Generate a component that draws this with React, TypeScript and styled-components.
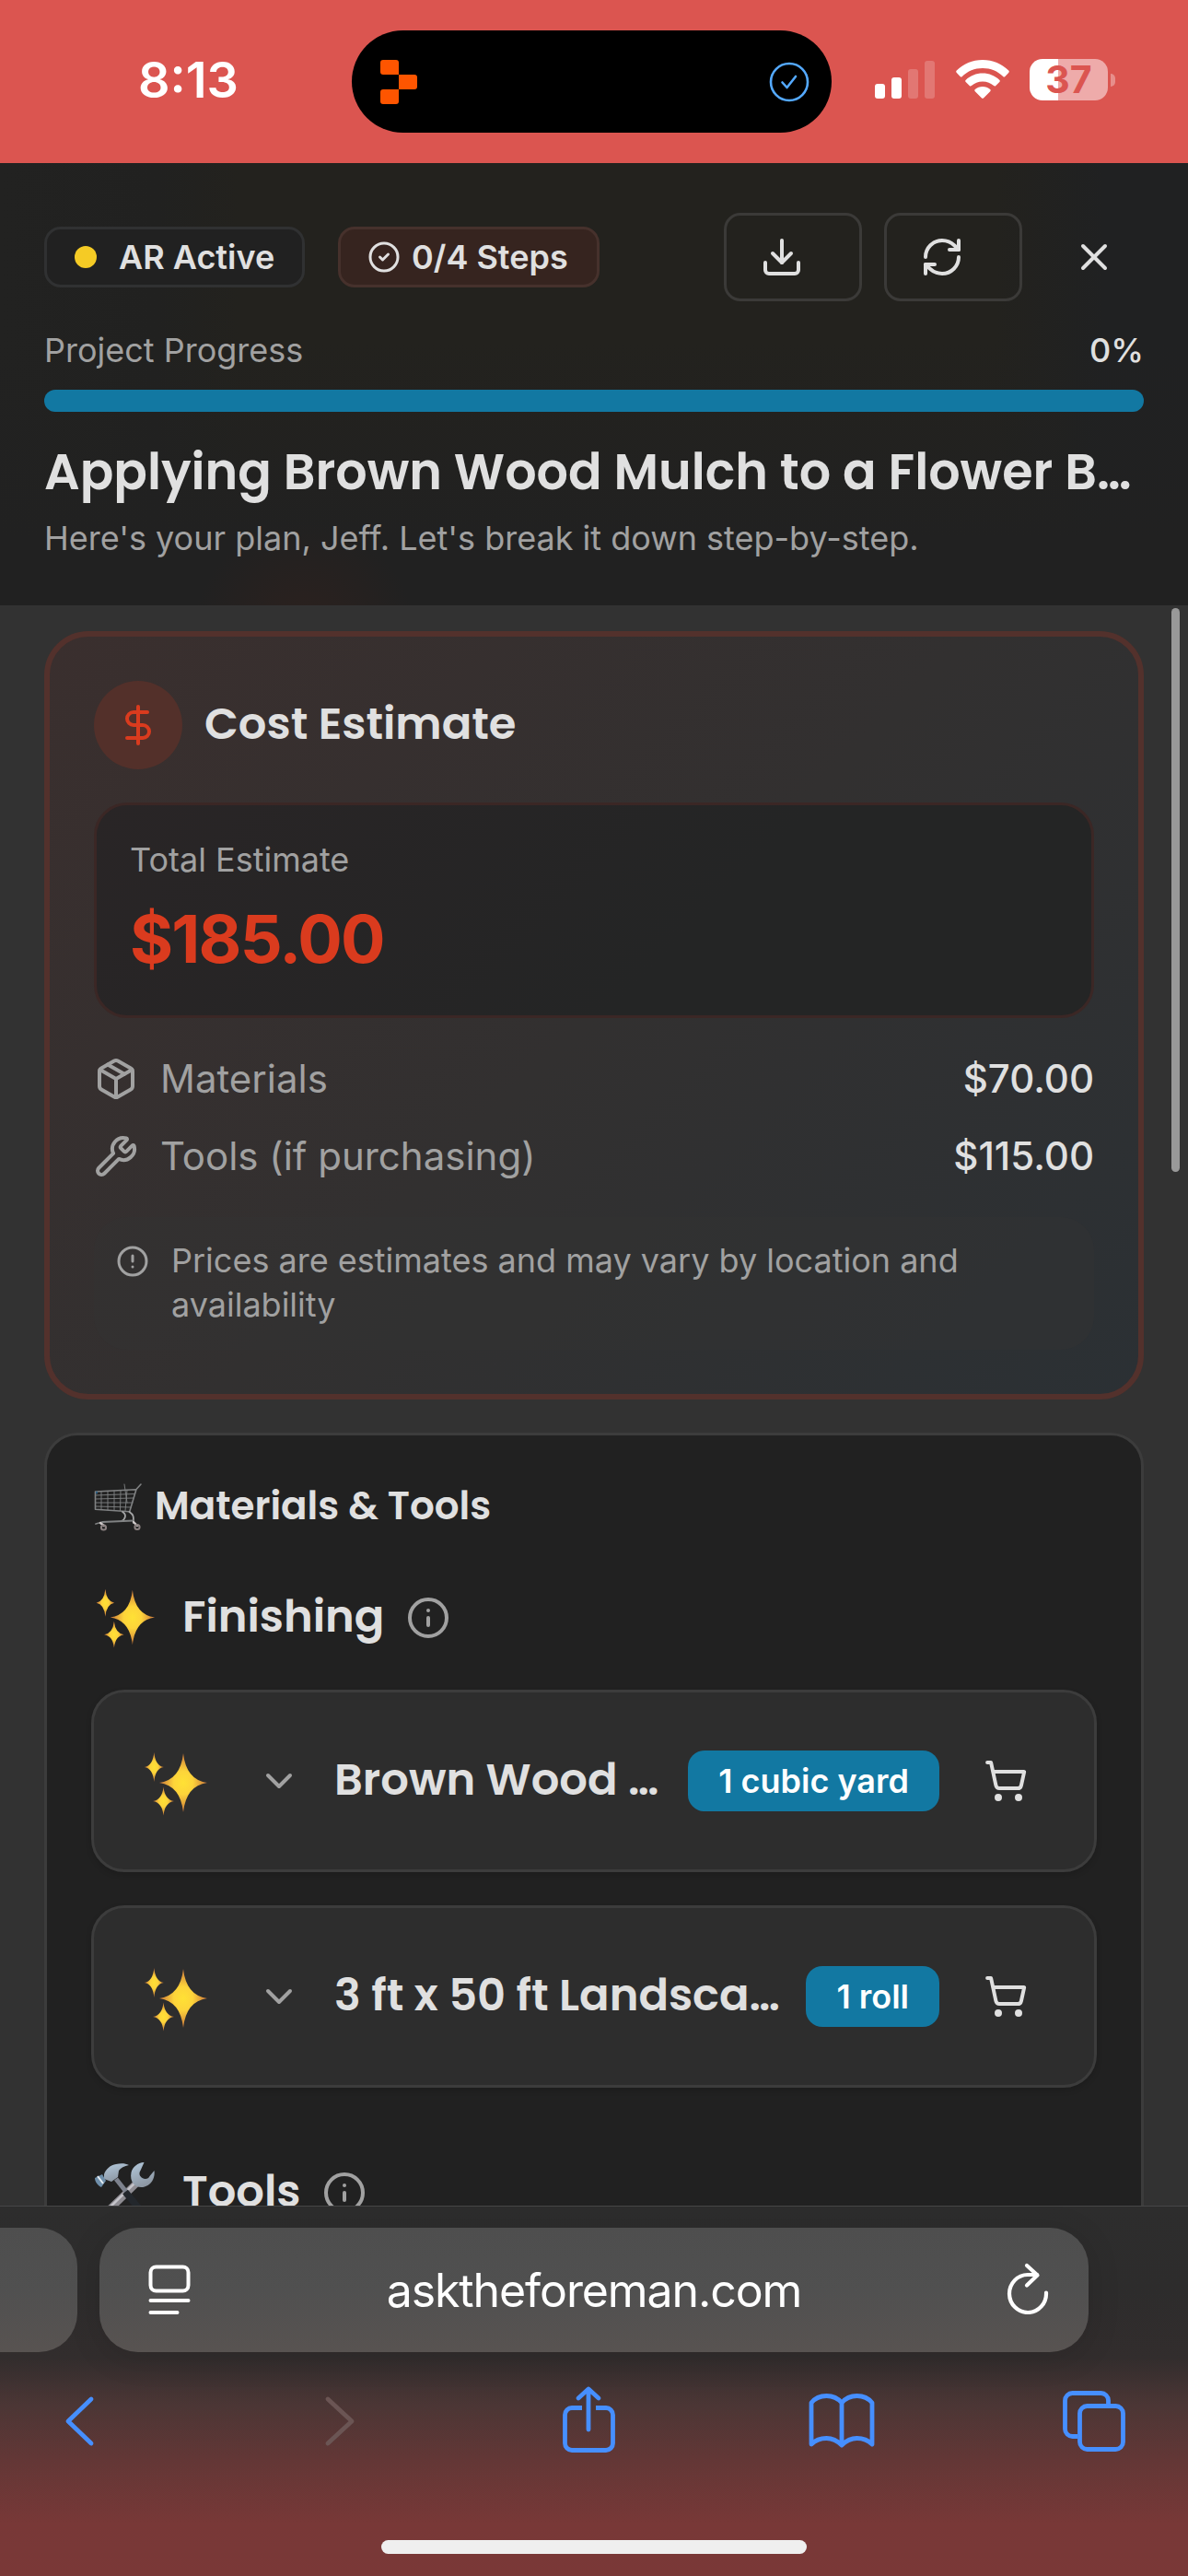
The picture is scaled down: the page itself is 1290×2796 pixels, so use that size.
import React from "react";
import styled, { createGlobalStyle } from "styled-components";
import {
  ChevronDown,
  CircleAlert,
  CircleCheck,
  DollarSign,
  Download,
  Info,
  Package,
  RefreshCw,
  ShoppingCart,
  Wrench,
  X,
} from "lucide-react";

const GlobalStyle = createGlobalStyle`
  * { box-sizing: border-box; }
  body {
    margin: 0;
    background: #323232;
    font-family: Inter, "Liberation Sans", sans-serif;
    -webkit-font-smoothing: antialiased;
  }
`;

const text = "#e0e0e0";
const muted = "#a1a1a1";
const heading = 'Poppins, Inter, "Liberation Sans", sans-serif';

const Screen = styled.main`
  display: flex;
  flex-direction: column;
  width: 1290px;
  height: 2796px;
  overflow: hidden;
  color: ${text};
`;

/* ---------- status bar ---------- */

const StatusBar = styled.div`
  flex: none;
  display: grid;
  grid-template-columns: 382px 521px 1fr;
  align-items: center;
  height: 177px;
  background: #db5550;
`;

const Time = styled.div`
  padding: 0 0 3px 150px;
  font-size: 54px;
  font-weight: 600;
  line-height: 60px;
  color: #fff;
`;

const Island = styled.div`
  display: flex;
  align-items: center;
  justify-content: space-between;
  height: 111px;
  padding: 0 24px 0 31px;
  border-radius: 56px;
  background: #000;
`;

const StatusIcons = styled.div`
  display: flex;
  align-items: center;
  padding: 0 0 4px 47px;
`;

const WifiSlot = styled.div`
  display: flex;
  margin: 0 22px 0 22px;
`;

const Battery = styled.div`
  width: 85px;
  height: 45px;
  border-radius: 14px;
  background: linear-gradient(90deg, #fff 31px, #eeabaa 31px);
  color: #db5550;
  font-size: 41px;
  font-weight: 700;
  line-height: 45px;
  text-align: center;
`;

const BatteryTip = styled.div`
  width: 5px;
  height: 14px;
  margin-left: 3px;
  border-radius: 0 5px 5px 0;
  background: #e78e8b;
`;

/* ---------- project header ---------- */

const Header = styled.header`
  flex: none;
  height: 480px;
  padding: 54px 48px 0;
  background:
    radial-gradient(circle 120px at 330px 510px, #2c211e, transparent),
    linear-gradient(180deg, transparent 40%, #212121 85%),
    linear-gradient(90deg, #222221 0, #212120 170px, #23221e 260px, #23221e 1080px, #202122 1200px);
`;

const Toolbar = styled.div`
  display: flex;
  align-items: center;
  height: 96px;
`;

const Pill = styled.div<{ $accent?: boolean }>`
  display: flex;
  align-items: center;
  gap: ${(p) => (p.$accent ? 12 : 24)}px;
  height: 66px;
  width: ${(p) => (p.$accent ? 284 : 283)}px;
  margin-right: 36px;
  padding-left: ${(p) => (p.$accent ? 29 : 30)}px;
  border: 3px solid ${(p) => (p.$accent ? "#46312c" : "#303132")};
  border-radius: 18px;
  background: ${(p) => (p.$accent ? "#36241f" : "#212121")};
  font-size: 36px;
  font-weight: 600;
  white-space: nowrap;
`;

const Dot = styled.span`
  width: 24px;
  height: 24px;
  border-radius: 50%;
  background: #f5cb25;
`;

const Actions = styled.div`
  display: flex;
  align-items: center;
  gap: 24px;
  margin-left: auto;
`;

const OutlineButton = styled.button`
  display: flex;
  align-items: center;
  width: 150px;
  height: 96px;
  padding: 0 0 0 36px;
  border: 3px solid #3b3a38;
  border-radius: 18px;
  background: transparent;
  color: ${text};
`;

const CloseButton = styled.button`
  display: grid;
  place-items: center;
  width: 108px;
  height: 96px;
  border: 0;
  background: transparent;
  color: ${text};
`;

const ProgressLabels = styled.div`
  display: flex;
  justify-content: space-between;
  margin-top: 29px;
  font-size: 36px;
  line-height: 48px;
  color: ${muted};
`;

const Percent = styled.span`
  font-weight: 500;
  color: ${text};
`;

const ProgressBar = styled.div`
  height: 24px;
  margin-top: 19px;
  border-radius: 12px;
  background: #1278a2;
`;

const Title = styled.h1`
  margin: 29px 0 0;
  font-family: ${heading};
  font-size: 54px;
  font-weight: 600;
  line-height: 72px;
  white-space: nowrap;
`;

const Subtitle = styled.p`
  margin: 6px 0 0;
  font-size: 36px;
  line-height: 60px;
  color: ${muted};
`;

/* ---------- scrolling content ---------- */

const Content = styled.section`
  position: relative;
  flex: none;
  height: 1737px;
  padding: 28px 48px 0;
  overflow: hidden;
  background: #323232;
`;

const Scrollbar = styled.div`
  position: absolute;
  top: 3px;
  right: 9px;
  width: 9px;
  height: 612px;
  border-radius: 5px;
  background: #999;
`;

const CostCard = styled.section`
  padding: 48px;
  border: 6px solid #53312c;
  border-radius: 48px;
  background: linear-gradient(135deg, #3a2f2e, #323030 50%, #2b3034);
`;

const CardHeader = styled.div`
  display: flex;
  align-items: center;
  gap: 24px;
`;

const IconCircle = styled.div`
  display: grid;
  place-items: center;
  width: 96px;
  height: 96px;
  border-radius: 50%;
  background: #53302a;
  color: #da3b1e;
`;

const SectionTitle = styled.h2<{ $size?: number }>`
  margin: 0;
  padding-bottom: 2px;
  font-family: ${heading};
  font-size: ${(p) => p.$size ?? 48}px;
  font-weight: 600;
  line-height: 60px;
  white-space: nowrap;
`;

const TotalBox = styled.div`
  height: 234px;
  margin-top: 36px;
  padding: 32px 36px 0;
  border: 3px solid #3b2725;
  border-radius: 36px;
  background: linear-gradient(135deg, #292526, #242525 60%);
`;

const TotalLabel = styled.div`
  font-size: 36px;
  line-height: 54px;
  color: ${muted};
`;

const TotalValue = styled.div`
  margin-top: 14px;
  font-size: 72px;
  font-weight: 700;
  letter-spacing: -1.8px;
  line-height: 90px;
  color: #da3b1e;
`;

const CostRow = styled.div<{ $first?: boolean }>`
  display: flex;
  align-items: center;
  gap: 24px;
  height: 60px;
  margin-top: ${(p) => (p.$first ? 36 : 24)}px;
  font-size: 42px;
  color: ${muted};

  span { padding-bottom: 1px; }
`;

const Amount = styled.span`
  margin-left: auto;
  font-weight: 500;
  color: ${text};
`;

const Note = styled.div`
  display: flex;
  gap: 24px;
  height: 144px;
  margin-top: 36px;
  padding: 23px 24px;
  border-radius: 36px;
  background: rgba(51, 52, 51, 0.45);
  font-size: 36px;
  line-height: 48px;
  color: ${muted};

  svg { flex: none; margin-top: 7px; }
`;

const ListCard = styled.section`
  margin-top: 36px;
  padding: 48px;
  height: 1100px;
  border: 3px solid #3c3c3c;
  border-radius: 36px;
  background: #212121;
`;

const GroupHeader = styled.div<{ $top: number; $gap: number }>`
  display: flex;
  align-items: center;
  height: 60px;
  margin-top: ${(p) => p.$top}px;
  padding-left: 3px;
  gap: ${(p) => p.$gap}px;
`;

const EmojiSlot = styled.span`
  display: flex;
  width: 72px;
`;

const InfoSlot = styled.span`
  display: flex;
  color: ${muted};
`;

const Items = styled.div`
  display: flex;
  flex-direction: column;
  gap: 36px;
  margin-top: 48px;
`;

const Item = styled.div`
  display: flex;
  align-items: center;
  height: 198px;
  padding: 0 72px 0 52px;
  border: 3px solid #3c3c3c;
  border-radius: 36px;
  background: #2d2d2d;
  box-shadow: 0 3px 6px rgba(0, 0, 0, 0.15);
`;

const SparkSlot = styled.span`
  display: flex;
  padding-top: 6px;
`;

const ChevronSlot = styled.span`
  display: flex;
  margin: 0 36px 0 53px;
  color: ${muted};
`;

const ItemName = styled.div`
  flex: 1;
  min-width: 0;
`;

const Badge = styled.span`
  display: flex;
  align-items: center;
  height: 66px;
  margin-right: 48px;
  padding: 0 33px;
  border-radius: 18px;
  background: #1278a2;
  color: #fff;
  font-size: 36px;
  font-weight: 600;
  white-space: nowrap;
`;

/* ---------- browser chrome ---------- */

const BrowserBar = styled.footer`
  flex: none;
  height: 402px;
  border-top: 1px solid #464647;
  padding-top: 23px;
  background: linear-gradient(
    180deg,
    #2d2d2d 0,
    #2d2c2c 90px,
    #322d2d 165px,
    #4b3635 215px,
    #633736 275px,
    #783837 345px,
    #7a3837 402px
  );
`;

const Tabs = styled.div`
  display: flex;
  gap: 24px;
`;

const tabFill = "linear-gradient(180deg, #4e4e4e, #505050 50%, #585351)";

const PreviousTab = styled.div`
  width: 84px;
  height: 135px;
  border-radius: 0 42px 42px 0;
  background: ${tabFill};
`;

const AddressBar = styled.div`
  display: grid;
  grid-template-columns: 64px 1fr 64px;
  align-items: center;
  justify-items: center;
  width: 1074px;
  height: 135px;
  padding: 0 36px;
  border-radius: 42px;
  background: ${tabFill};
  box-shadow: 0 6px 36px rgba(0, 0, 0, 0.12);
`;

const Address = styled.span`
  color: #fff;
  font-size: 50px;
  letter-spacing: -1.1px;
`;

const ReaderSlot = styled.span`
  display: flex;
  justify-self: start;
  padding-left: 17px;
`;

const ReloadSlot = styled.span`
  display: flex;
  justify-self: end;
  padding: 0 6px 3px 0;
`;

const BrowserTools = styled.nav`
  display: flex;
  justify-content: space-between;
  margin-top: 37px;
  padding: 0 66px 0 50px;
`;

const HomeIndicator = styled.div`
  width: 462px;
  height: 15px;
  margin: 95px auto 0;
  border-radius: 8px;
  background: #efefef;
`;

/* ---------- drawings ---------- */

const star = (cx: number, cy: number, w: number, h: number) => {
  const kx = w * 0.12;
  const ky = h * 0.1;
  return (
    `M${cx} ${cy - h}Q${cx + kx} ${cy - ky} ${cx + w} ${cy}` +
    `Q${cx + kx} ${cy + ky} ${cx} ${cy + h}` +
    `Q${cx - kx} ${cy + ky} ${cx - w} ${cy}` +
    `Q${cx - kx} ${cy - ky} ${cx} ${cy - h}Z`
  );
};

function Sparkles({ size }: { size: number }) {
  return (
    <svg width={size} height={size} viewBox="0 0 72 72">
      <defs>
        <radialGradient id="spark">
          <stop offset="0" stopColor="#ffe135" />
          <stop offset="0.4" stopColor="#fdd43a" />
          <stop offset="1" stopColor="#c9743a" />
        </radialGradient>
      </defs>
      <path d={star(45, 35, 26, 32)} fill="url(#spark)" />
      <path d={star(13.3, 18, 10.5, 16)} fill="url(#spark)" />
      <path d={star(23.5, 55, 11.5, 15.5)} fill="url(#spark)" />
    </svg>
  );
}

function CartPicture() {
  return (
    <svg width="54" height="54" viewBox="0 0 54 54" fill="none" stroke="#808283" strokeLinecap="round" strokeLinejoin="round">
      <path strokeWidth="1.6" d="M51 2l-5 5.500-7.300 24.200L1.500 29.300V10L45.300 7.700" />
      <path strokeWidth="0.9" d="M1.500 14l43-1.500M1.500 18l41.500-1M1.500 22h40.500M1.500 26l39 1M8 10v19.500M15 9.500v20.500M22 9v21.500M29 8.700l-.5 22M36 8.300l-2 22.700M33 2l3 20" />
      <path strokeWidth="1.8" stroke="#a5a6a7" d="M31 32c5 3 3 8-1 10M38.500 32c6 4 4 7 4.500 12" />
      <path strokeWidth="1.8" d="M2 45l7-2 34-1.500" />
      <path stroke="#2a5a7c" strokeWidth="2.500" d="M2 11h2" strokeLinecap="butt" />
      <path stroke="#cfc9c9" strokeWidth="2.400" d="M7 44l4 3M43 43l4 4" />
      <circle cx="10.500" cy="49" r="2.600" stroke="#8a8080" strokeWidth="2" />
      <circle cx="47" cy="48.500" r="2.600" stroke="#8a8080" strokeWidth="2" />
    </svg>
  );
}

function HammerAndWrench() {
  return (
    <svg width="69" height="69" viewBox="0 0 69 69" fill="none">
      <defs>
        <linearGradient id="steel" x1="0" y1="0" x2="0.4" y2="1">
          <stop offset="0" stopColor="#b3c9dc" />
          <stop offset="1" stopColor="#8d97a3" />
        </linearGradient>
      </defs>
      <path d="M49 21L16 53" stroke="#8e8c92" strokeWidth="8" />
      <path d="M47 21L14 53" stroke="#c5c4ca" strokeWidth="2.500" />
      <path
        fill="url(#steel)"
        d="M54.500 1c-7 .5-12.500 5-14 11-1 5 0 9 2 12 4 5 11 5 16 2 5-3 8-9 7-16l-5 6c-1 3-5 4-8 2-3-2-4-5-2-8z"
      />
      <path d="M24 19L50 52" stroke="#7d828d" strokeWidth="5" />
      <path d="M34 33L52 55" stroke="#23272c" strokeWidth="7.500" />
      <path fill="url(#steel)" d="M11 14c2-6 7-10 13-11 5-1 10-1 14 1-5 1-9 3-11 6l-1 7-7 5-8-3z" />
      <path fill="#6f8faa" d="M1 18l8-4 4 7-5 7c-4-2-7-6-7-10z" />
      <path stroke="#e6edf3" strokeWidth="2" d="M4 16l6 8" />
    </svg>
  );
}

function Signal() {
  return (
    <svg width="66" height="42" viewBox="0 0 66 42" fill="#fff">
      <rect x="0" y="25" width="11" height="16" rx="3" />
      <rect x="18" y="18" width="11" height="23" rx="3" />
      <rect x="36" y="9" width="11" height="32" rx="3" opacity="0.2" />
      <rect x="54" y="0" width="11" height="41" rx="3" opacity="0.2" />
    </svg>
  );
}

function WifiFan() {
  return (
    <svg width="58" height="43" viewBox="0 0 58 43" fill="#fff">
      <path d="M29 0C18 0 8 4.400.8 11.500c-.8.800-.8 1.600 0 2.400l3.800 4c.7.700 1.500.700 2.200 0C12.600 12.300 20.400 9 29 9s16.400 3.300 22.200 8.900c.7.700 1.500.700 2.200 0l3.800-4c.8-.8.8-1.600 0-2.400C50 4.400 40 0 29 0z" />
      <path d="M29 14.500c-7 0-13.400 2.700-18.200 7.200-.8.700-.8 1.500-.1 2.300l4 4c.7.700 1.500.700 2.200.1 3.200-2.900 7.400-4.700 12.100-4.700s8.900 1.800 12.100 4.700c.7.600 1.500.600 2.200-.1l4-4c.7-.8.7-1.600-.1-2.300C42.400 17.200 36 14.500 29 14.500z" />
      <path d="M29 29c-3.100 0-6 1.200-8.200 3.100-.7.600-.7 1.400 0 2.100l7 7c.8.800 1.600.8 2.400 0l7-7c.7-.7.7-1.500 0-2.100C35 30.200 32.100 29 29 29z" />
    </svg>
  );
}

function TileLogo() {
  return (
    <svg width="41" height="48" viewBox="0 0 41 48" fill="#fe5500">
      <path d="M3 0h14a3 3 0 0 1 3 3v13H3a3 3 0 0 1-3-3V3a3 3 0 0 1 3-3z" />
      <path d="M20 16h17a3 3 0 0 1 3 3v10a3 3 0 0 1-3 3H20z" />
      <path d="M3 32h17v13a3 3 0 0 1-3 3H3a3 3 0 0 1-3-3V35a3 3 0 0 1 3-3z" />
    </svg>
  );
}

function IslandCheck() {
  return (
    <svg width="44" height="44" viewBox="0 0 44 44" fill="none" stroke="#54a9ff" strokeWidth="2.600" strokeLinecap="round" strokeLinejoin="round">
      <circle cx="22" cy="22" r="20" />
      <path d="M14.500 22.500l5 5.500 9.500-12" />
    </svg>
  );
}

function ReaderIcon() {
  return (
    <svg width="46" height="56" viewBox="0 0 46 56" fill="none" stroke="#fff" strokeWidth="4" strokeLinecap="round">
      <rect x="2.500" y="2.500" width="41" height="26" rx="6" />
      <path d="M2.500 39h41M2.500 52h29" />
    </svg>
  );
}

function ReloadIcon() {
  return (
    <svg width="48" height="56" viewBox="0 0 48 56" fill="none" stroke="#fff" strokeWidth="4.200" strokeLinecap="round" strokeLinejoin="round">
      <path d="M44 32.500A20 20.500 0 1 1 24 13h10" />
      <path d="M23 3l11.500 10.500L23 24.500" />
    </svg>
  );
}

const ToolIcon = styled.svg<{ $dim?: boolean }>`
  width: 72px;
  height: 72px;
  overflow: visible;
  fill: none;
  stroke: ${(p) => (p.$dim ? "#6b5554" : "#468fff")};
  stroke-width: 4.8;
  stroke-linecap: round;
  stroke-linejoin: round;
`;

/* ---------- page ---------- */

const items = [
  { name: "Brown Wood …", amount: "1 cubic yard" },
  { name: "3 ft x 50 ft Landsca…", amount: "1 roll" },
];

export default function App() {
  return (
    <>
      <GlobalStyle />
      <Screen>
        <StatusBar>
          <Time>8:13</Time>
          <Island>
            <TileLogo />
            <IslandCheck />
          </Island>
          <StatusIcons>
            <Signal />
            <WifiSlot>
              <WifiFan />
            </WifiSlot>
            <Battery>37</Battery>
            <BatteryTip />
          </StatusIcons>
        </StatusBar>

        <Header>
          <Toolbar>
            <Pill>
              <Dot />
              AR Active
            </Pill>
            <Pill $accent>
              <CircleCheck size={36} />
              0/4 Steps
            </Pill>
            <Actions>
              <OutlineButton>
                <Download size={48} />
              </OutlineButton>
              <OutlineButton>
                <RefreshCw size={48} />
              </OutlineButton>
              <CloseButton>
                <X size={48} />
              </CloseButton>
            </Actions>
          </Toolbar>
          <ProgressLabels>
            <span>Project Progress</span>
            <Percent>0%</Percent>
          </ProgressLabels>
          <ProgressBar />
          <Title>Applying Brown Wood Mulch to a Flower B…</Title>
          <Subtitle>Here's your plan, Jeff. Let's break it down step-by-step.</Subtitle>
        </Header>

        <Content>
          <CostCard>
            <CardHeader>
              <IconCircle>
                <DollarSign size={48} />
              </IconCircle>
              <SectionTitle>Cost Estimate</SectionTitle>
            </CardHeader>
            <TotalBox>
              <TotalLabel>Total Estimate</TotalLabel>
              <TotalValue>$185.00</TotalValue>
            </TotalBox>
            <CostRow $first>
              <Package size={48} />
              <span>Materials</span>
              <Amount>$70.00</Amount>
            </CostRow>
            <CostRow>
              <Wrench size={48} />
              <span>Tools (if purchasing)</span>
              <Amount>$115.00</Amount>
            </CostRow>
            <Note>
              <CircleAlert size={36} />
              <span>Prices are estimates and may vary by location and availability</span>
            </Note>
          </CostCard>

          <ListCard>
            <GroupHeader $top={0} $gap={12}>
              <CartPicture />
              <SectionTitle $size={42}>Materials &amp; Tools</SectionTitle>
            </GroupHeader>
            <GroupHeader $top={60} $gap={24}>
              <EmojiSlot>
                <Sparkles size={67} />
              </EmojiSlot>
              <SectionTitle>Finishing</SectionTitle>
              <InfoSlot>
                <Info size={48} />
              </InfoSlot>
            </GroupHeader>
            <Items>
              {items.map((item) => (
                <Item key={item.name}>
                  <SparkSlot>
                    <Sparkles size={72} />
                  </SparkSlot>
                  <ChevronSlot>
                    <ChevronDown size={48} />
                  </ChevronSlot>
                  <ItemName>
                    <SectionTitle as="h3">{item.name}</SectionTitle>
                  </ItemName>
                  <Badge>{item.amount}</Badge>
                  <ShoppingCart size={48} />
                </Item>
              ))}
            </Items>
            <GroupHeader $top={84} $gap={24}>
              <EmojiSlot>
                <HammerAndWrench />
              </EmojiSlot>
              <SectionTitle>Tools</SectionTitle>
              <InfoSlot>
                <Info size={48} />
              </InfoSlot>
            </GroupHeader>
          </ListCard>
          <Scrollbar />
        </Content>

        <BrowserBar>
          <Tabs>
            <PreviousTab />
            <AddressBar>
              <ReaderSlot>
                <ReaderIcon />
              </ReaderSlot>
              <Address>asktheforeman.com</Address>
              <ReloadSlot>
                <ReloadIcon />
              </ReloadSlot>
            </AddressBar>
          </Tabs>
          <BrowserTools>
            <ToolIcon viewBox="0 0 72 72">
              <path d="M49 14L24 38l25 24" />
            </ToolIcon>
            <ToolIcon viewBox="0 0 72 72" $dim>
              <path d="M30 14l26 24-26 24" />
            </ToolIcon>
            <ToolIcon viewBox="0 0 72 72">
              <path d="M38 47V4M27 13L38 3l11 10" />
              <path strokeLinecap="butt" d="M31 23.500H20a7.500 7.500 0 0 0-7.500 7.500v31a7.500 7.500 0 0 0 7.500 7.500h37a7.500 7.500 0 0 0 7.500-7.500V31a7.500 7.500 0 0 0-7.500-7.500H46" />
            </ToolIcon>
            <ToolIcon viewBox="0 0 72 72">
              <path d="M37 18v46M37 18C32 12 27 10.500 20.500 10.500S8 13 4 18v45c4-4 10-6.500 16.500-6.500S32 59 37 64c5-5 10-7.500 16.500-7.500S66 59 70 63V18c-4-5-10-7.500-16.500-7.500S42 12 37 18z" />
            </ToolIcon>
            <ToolIcon viewBox="0 0 72 72">
              <path strokeLinecap="butt" d="M18 54.500h-5.500a8 8 0 0 1-8-8v-31a8 8 0 0 1 8-8h31a8 8 0 0 1 8 8V19" />
              <rect x="20.500" y="21.500" width="47" height="47" rx="8" />
            </ToolIcon>
          </BrowserTools>
          <HomeIndicator />
        </BrowserBar>
      </Screen>
    </>
  );
}
